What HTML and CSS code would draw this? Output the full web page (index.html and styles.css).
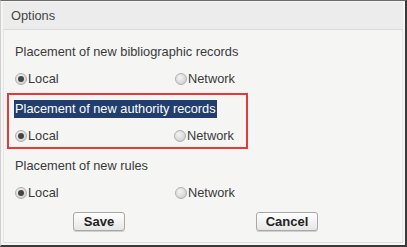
FILE: index.html
```html
<!DOCTYPE html>
<html lang="en">
<head>
  <meta charset="UTF-8">
  <title>Options</title>
  <link rel="stylesheet" href="styles.css">
</head>
<body>
  <div class="dialog">
    <div class="dialog-head">Options</div>
    <div class="dialog-body">
      <div class="group first">
        <div class="group-title">Placement of new bibliographic records</div>
        <div class="choice-row">
          <label class="choice"><span class="radio on"></span>Local</label>
          <label class="choice"><span class="radio"></span>Network</label>
        </div>
      </div>
      <div class="group marked">
        <div class="group-title"><span class="selected-text">Placement of new authority records</span></div>
        <div class="choice-row">
          <label class="choice"><span class="radio on"></span>Local</label>
          <label class="choice"><span class="radio"></span>Network</label>
        </div>
      </div>
      <div class="group last">
        <div class="group-title">Placement of new rules</div>
        <div class="choice-row">
          <label class="choice"><span class="radio on"></span>Local</label>
          <label class="choice"><span class="radio"></span>Network</label>
        </div>
      </div>
      <div class="actions">
        <button class="btn save">Save</button>
        <button class="btn cancel">Cancel</button>
      </div>
    </div>
  </div>
</body>
</html>
```

FILE: styles.css
```css
html, body { margin: 0; padding: 0; background: #f5f5f4; }
body { font-family: "Liberation Sans", Arial, sans-serif; font-size: 12.8px; color: #3a3a3a; }
.dialog { width: 407px; height: 247px; box-sizing: border-box; border-top: 1px solid #6a6a6a; border-left: 1px solid #cfcfcf; border-right: 2px solid #3a3a3a; border-bottom: 2px solid #3a3a3a; display: flex; flex-direction: column; }
.dialog-head { height: 27px; line-height: 27px; margin: 1px 2px 0 2px; padding-left: 8px; background: #ececec; border-bottom: 1px solid #dadada; color: #444; }
.dialog-body { flex: 1; margin: 0 2px 2px 2px; background: #f5f5f4; border-left: 1px solid #e6e6e6; border-right: 1px solid #e2e2e2; border-bottom: 1px solid #dedede; }
.group { padding-left: 11px; }
.group.first { padding-top: 14px; }
.group-title { height: 16px; line-height: 16px; }
.choice-row { display: grid; grid-template-columns: 160px auto; height: 16px; margin-top: 11px; }
.choice { display: flex; align-items: center; line-height: 16px; }
.radio { width: 10px; height: 10px; margin-right: 1px; border-radius: 50%; border: 1px solid #b0b0b0; background: radial-gradient(circle at 40% 35%, #f4f4f4 0%, #dcdcdc 55%, #c4c4c4 100%); position: relative; }
.radio.on::after { content: ""; position: absolute; left: 2px; top: 2px; width: 6px; height: 6px; border-radius: 50%; background: #444; }
.group.marked { margin: 6px 0 0 3px; width: 241px; box-sizing: border-box; border: 2px solid #e53a3a; padding: 5px 0 3px 5px; }
.group.marked .group-title { height: 18px; line-height: 18px; }
.group.marked .choice-row { margin-top: 10px; }
.group.marked .choice:first-child { margin-left: 1px; }
.selected-text { display: inline-block; background: #213e6f; color: #fff; padding: 0 1px; }
.group.last { padding-top: 9px; }
.group.last .choice-row { margin-top: 11px; }
.actions { display: flex; margin-top: 11px; }
.btn { height: 19px; padding: 0; font-family: "Liberation Sans", Arial, sans-serif; font-size: 13px; font-weight: bold; color: #222; border: 1px solid #a8a8a8; border-radius: 3px; background: linear-gradient(#ffffff, #e6e6e6); box-shadow: 0 1px 0 #d0d0d0; }
.btn.save { width: 52px; margin-left: 69px; }
.btn.cancel { width: 62px; margin-left: 131px; }
```
